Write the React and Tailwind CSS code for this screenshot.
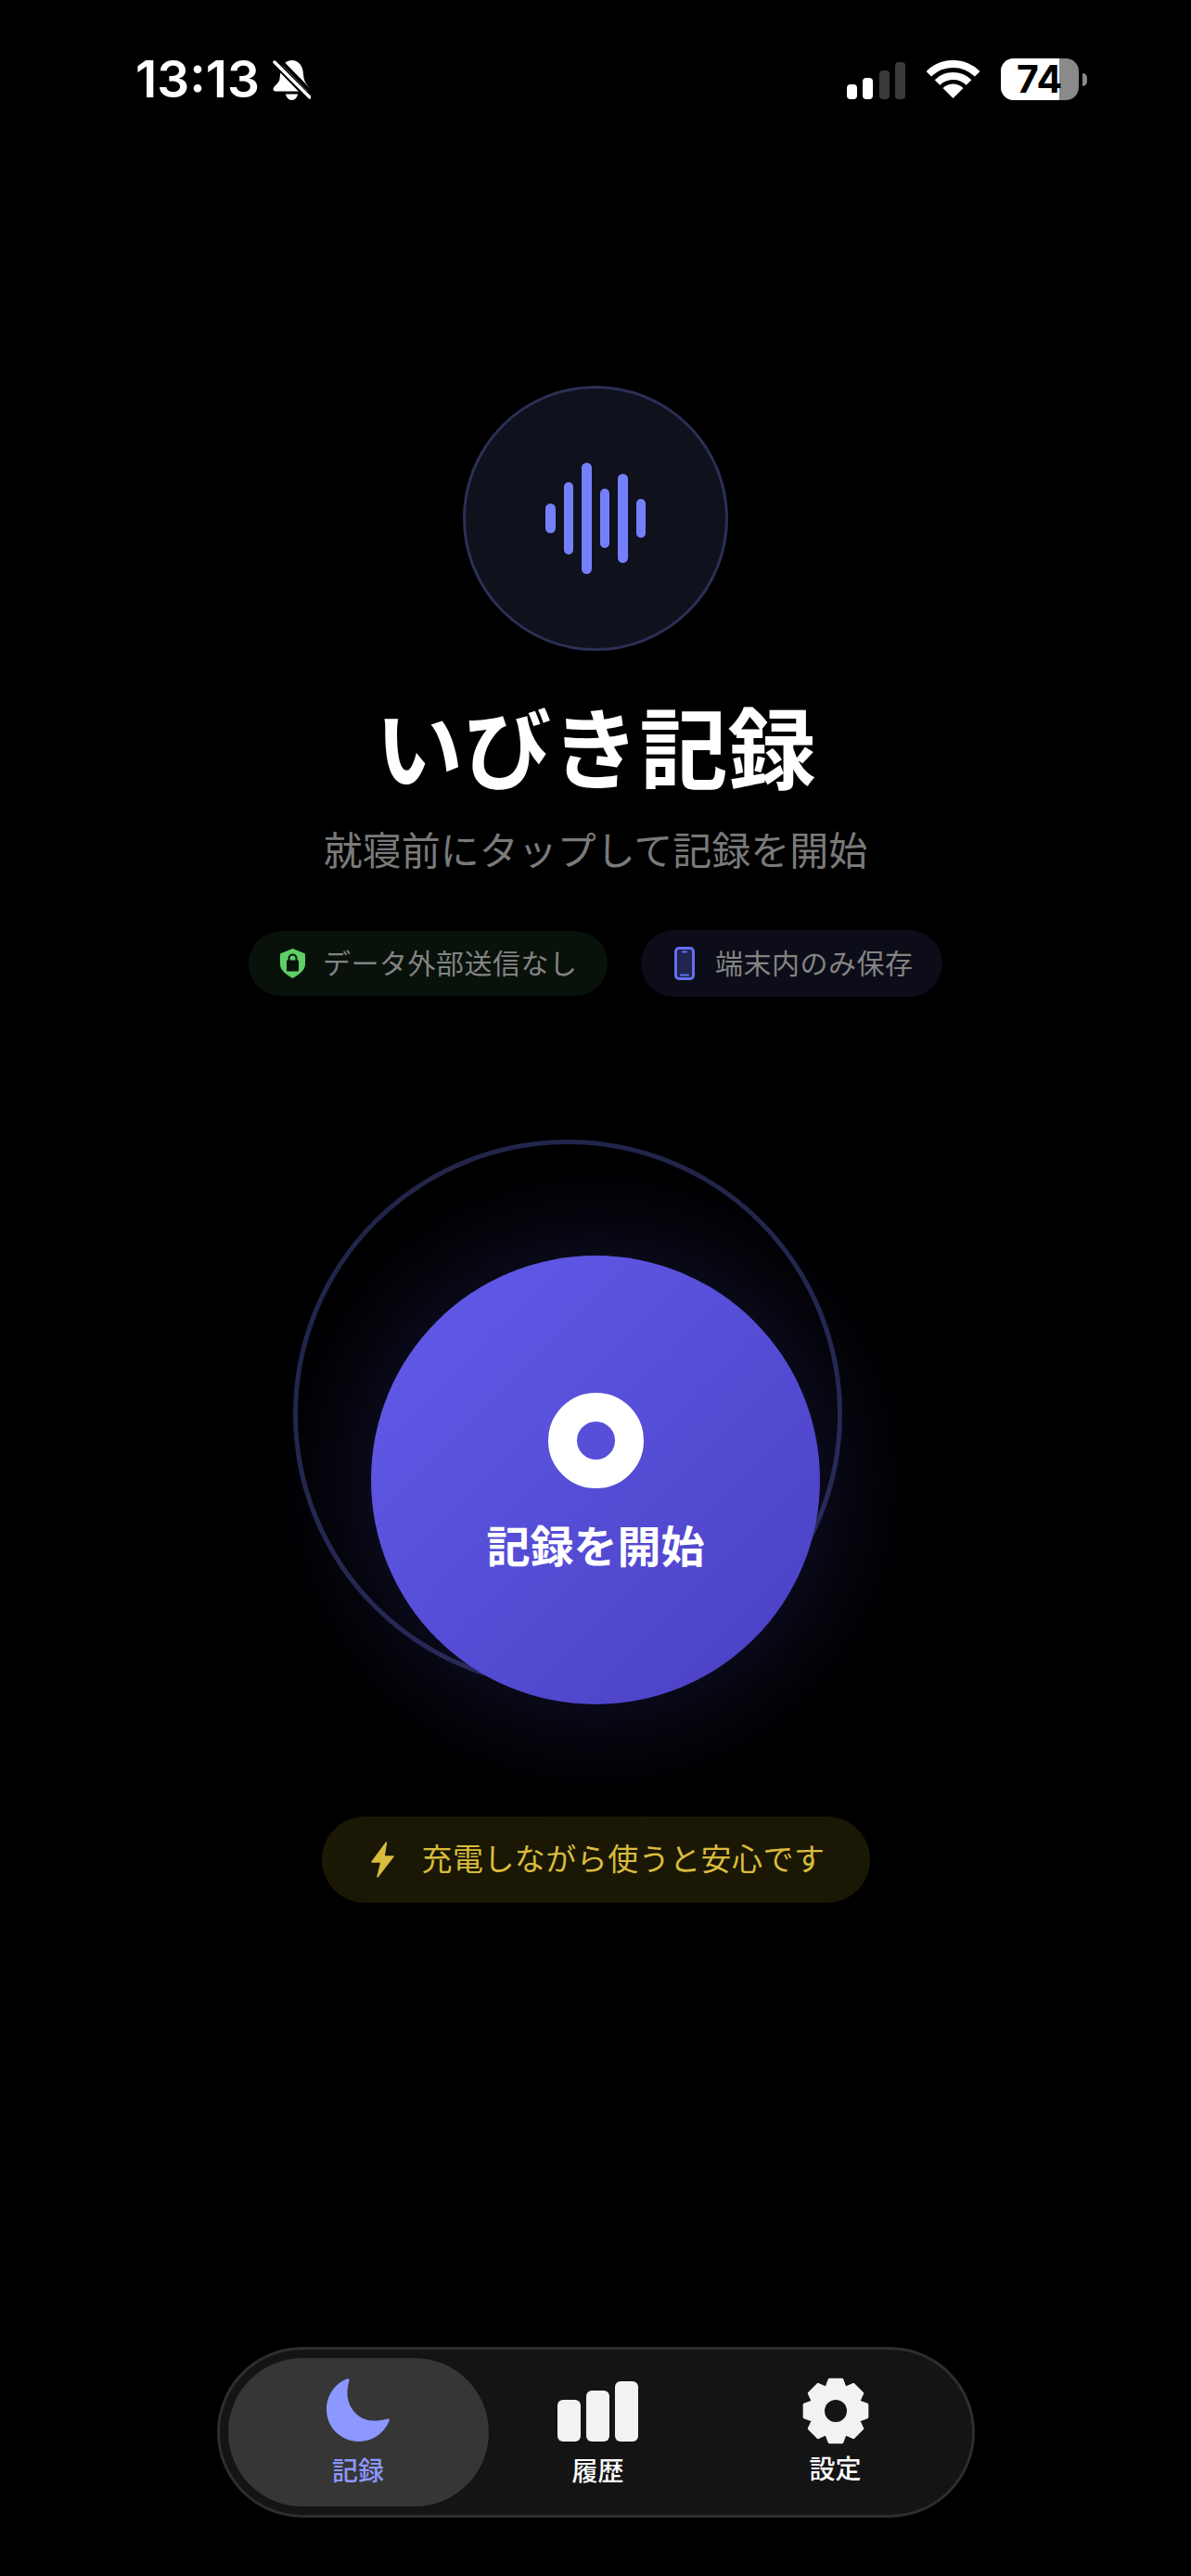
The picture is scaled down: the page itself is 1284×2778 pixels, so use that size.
import React from "react";

// 8-tooth cog outline, centred on 36,36
const gearPoints = Array.from({ length: 8 }, (_, i) => {
  const a = (i * Math.PI) / 4 - Math.PI / 2;
  return [
    [a - 0.44, 25.5],
    [a - 0.2, 34.5],
    [a + 0.2, 34.5],
    [a + 0.44, 25.5],
  ]
    .map(([t, r]) => `${(36 + r * Math.cos(t)).toFixed(2)},${(36 + r * Math.sin(t)).toFixed(2)}`)
    .join(" ");
}).join(" ");

const waveBars = [
  "h-[32px]",
  "h-[78px]",
  "h-[120px]",
  "h-[64px]",
  "h-[96px]",
  "h-[42px]",
];

function StatusBar() {
  return (
    <div className="w-full h-[45px] mt-[63px] pl-[146px] pr-[112px] flex justify-between items-center shrink-0">
      <div className="flex items-center gap-[14px]">
        <span className="font-['Inter',sans-serif] text-[55px] leading-[45px] font-semibold text-white">
          13:13
        </span>
        <svg width="41" height="44" viewBox="0 0 41 44" className="mt-[1px]">
          <path
            d="M21 1C14 1 9.5 6 8.5 13L7.5 21C7 26 1.5 28 0.5 32C0.5 33.5 1.5 34.5 3 34.5H38C39.5 34.5 40.5 33.5 40 32C38.5 28 34.5 26 33.5 20L32.5 12C31.5 6 27 1 21 1Z"
            fill="#fff"
          />
          <path d="M14 37.5H27C26.5 41 24 44 20.5 44C17 44 14.5 41 14 37.5Z" fill="#fff" />
          <path d="M5 -2L44 38" stroke="#000" strokeWidth="4" />
          <path d="M1 2L40 42" stroke="#000" strokeWidth="7" />
          <path d="M2 3L40 41" stroke="#fff" strokeWidth="3.5" strokeLinecap="round" />
        </svg>
      </div>
      <div className="flex items-center">
        <div className="flex items-end gap-[6.5px] h-[40px] mt-[3px]">
          <div className="w-[11px] h-[16px] rounded-[4px] bg-white" />
          <div className="w-[11px] h-[23px] rounded-[4px] bg-white" />
          <div className="w-[11px] h-[31px] rounded-[4px] bg-[#3a3a3a]" />
          <div className="w-[11px] h-[40px] rounded-[4px] bg-[#3a3a3a]" />
        </div>
        <svg width="57" height="41" viewBox="0 0 57 41" className="ml-[23px]">
          <path d="M2.3 14.8A37 37 0 0 1 54.7 14.8" fill="none" stroke="#fff" strokeWidth="8" />
          <path d="M11.5 24A24 24 0 0 1 45.5 24" fill="none" stroke="#fff" strokeWidth="8" />
          <path d="M28.5 41L17.5 30A15.5 15.5 0 0 1 39.5 30Z" fill="#fff" />
        </svg>
        <div className="ml-[23px] relative flex items-center">
          <div className="w-[84px] h-[45px] rounded-[14px] overflow-hidden bg-[#8a8a8a] flex">
            <div className="w-[63px] h-full bg-white" />
          </div>
          <span className="absolute left-[17px] top-0 w-[48px] text-center font-['Inter',sans-serif] text-[41px] leading-[45px] font-bold text-black">
            74
          </span>
          <div className="ml-[4px] w-[5px] h-[14px] rounded-r-full bg-[#8a8a8a]" />
        </div>
      </div>
    </div>
  );
}

function Pills() {
  return (
    <div className="mt-[63px] flex items-center gap-[36px] h-[72px] shrink-0">
      <div className="h-[70px] w-[387px] pl-[34px] rounded-full bg-[#08120b] flex items-center">
        <svg width="27" height="32" viewBox="0 0 27 32">
          <path
            d="M13.5 0L26 5C26.5 5.2 27 5.8 27 6.5V17C27 23 20 28.5 13.5 32C7 28.5 0 23 0 17V6.5C0 5.8 0.5 5.2 1 5Z"
            fill="#5fcf65"
          />
          <rect x="7" y="12.5" width="13" height="12" rx="1" fill="#08120b" />
          <path d="M9.5 13V10.5A4 4 0 0 1 17.5 10.5V13" fill="none" stroke="#08120b" strokeWidth="2" />
        </svg>
        <span className="ml-[19px] mb-[5px] text-[30px] leading-[40px] tracking-[0.5px] text-[#838383] whitespace-nowrap">
          データ外部送信なし
        </span>
      </div>
      <div className="h-[72px] w-[325px] pl-[36px] rounded-full bg-[#0c0d18] flex items-center">
        <svg width="22" height="36" viewBox="0 0 22 36">
          <rect x="1.5" y="1.5" width="19" height="33" rx="3.5" fill="#20244f" stroke="#6270f0" strokeWidth="3" />
          <rect x="8" y="4.5" width="6" height="2" rx="1" fill="#6270f0" />
          <rect x="6" y="29.5" width="10" height="2" rx="1" fill="#6270f0" />
        </svg>
        <span className="ml-[22px] mb-[5px] text-[30px] leading-[40px] tracking-[0.5px] text-[#838383] whitespace-nowrap">
          端末内のみ保存
        </span>
      </div>
    </div>
  );
}

function RecordButton() {
  return (
    <div className="relative mt-[279px] w-[484px] h-[484px] shrink-0">
      {/* ring sits behind the button, shifted up and to the left */}
      <div className="absolute left-[-84px] top-[-125px] w-[592px] h-[592px] rounded-full border-[5px] border-[#23264a]" />
      <button className="absolute inset-0 rounded-full bg-gradient-to-br from-[#635ceb] to-[#4a3fc2] shadow-[0_0_120px_14px_rgba(92,84,229,0.2)] flex flex-col items-center">
        <div className="mt-[148px] w-[103px] h-[103px] rounded-full border-[31px] border-white" />
        <span className="mt-[28px] text-[47px] leading-[64px] font-bold text-white whitespace-nowrap">
          記録を開始
        </span>
      </button>
    </div>
  );
}

function ChargeHint() {
  return (
    <div className="mt-[121px] h-[93px] w-[591px] pl-[53px] rounded-full bg-[#1a1705] flex items-center shrink-0">
      <svg width="25" height="39" viewBox="0 0 25 39">
        <path d="M16.5 1L1 22H11L7 38L24 16H14Z" fill="#d9bc3c" stroke="#d9bc3c" strokeWidth="1.5" strokeLinejoin="round" />
      </svg>
      <span className="ml-[30px] mb-[5px] text-[33px] leading-[44px] tracking-[0.45px] text-[#d9bc3c] whitespace-nowrap">
        充電しながら使うと安心です
      </span>
    </div>
  );
}

function TabBar() {
  return (
    <nav className="mt-auto mb-[63px] w-[817px] h-[184px] p-[9px] rounded-[92px] border-[3px] border-[#2e2e2e] bg-[#141414] flex shrink-0">
      <div className="w-[281px] h-full rounded-[80px] bg-[#363636] flex flex-col items-center">
        <svg width="68" height="68" viewBox="0 0 68 68" className="mt-[22px]">
          <path
            d="M22.5 0.3C24 -0.2 25 1 24.5 2.5C23.2 6.5 22.5 11 22.5 16C22.5 32 35 45.5 51 45.5C56 45.5 60.5 45 65.5 43.5C67.5 43 68.5 44.5 67.5 46C62 59 49.5 68 35 68C15.5 68 0 52.5 0 33.5C0 18 9.5 5 22.5 0.3Z"
            fill="#8c97ff"
          />
        </svg>
        <span className="mt-[8px] text-[28px] leading-[44px] font-medium text-[#8c97ff]">記録</span>
      </div>
      <div className="w-[236px] h-full flex flex-col items-center">
        <div className="mt-[24px] h-[66px] flex items-end gap-[6.5px]">
          <div className="w-[24.5px] h-[45px] rounded-[6px] bg-[#f2f2f2]" />
          <div className="w-[24.5px] h-[55px] rounded-[6px] bg-[#f2f2f2]" />
          <div className="w-[24.5px] h-[65px] rounded-[6px] bg-[#f2f2f2]" />
        </div>
        <span className="mt-[8px] text-[28px] leading-[44px] font-medium text-white">履歴</span>
      </div>
      <div className="flex-1 h-full flex flex-col items-center">
        <svg width="72" height="72" viewBox="0 0 72 72" className="mt-[21px]">
          <polygon points={gearPoints} fill="#f2f2f2" stroke="#f2f2f2" strokeWidth="3" strokeLinejoin="round" />
          <circle cx="36" cy="36" r="12" fill="#141414" />
        </svg>
        <span className="mt-[3px] text-[28px] leading-[44px] font-medium text-white">設定</span>
      </div>
    </nav>
  );
}

export default function App() {
  return (
    <div className="w-[1284px] h-[2778px] bg-black overflow-hidden flex flex-col items-center font-['Noto_Sans_CJK_JP',sans-serif]">
      <StatusBar />

      <div className="mt-[308px] w-[286px] h-[286px] rounded-full border-[3px] border-[#2c2f55] bg-[#0f111c] flex items-center justify-center gap-[9px] shrink-0">
        {waveBars.map((h) => (
          <div key={h} className={`w-[10.5px] rounded-full bg-[#7480fb] ${h}`} />
        ))}
      </div>

      <h1 className="mt-[51px] text-[95px] leading-[100px] font-bold text-white whitespace-nowrap shrink-0">
        いびき記録
      </h1>
      <p className="mt-[37px] text-[42px] leading-[50px] text-[#7a7a7a] whitespace-nowrap shrink-0">
        就寝前にタップして記録を開始
      </p>

      <Pills />
      <RecordButton />
      <ChargeHint />
      <TabBar />
    </div>
  );
}
